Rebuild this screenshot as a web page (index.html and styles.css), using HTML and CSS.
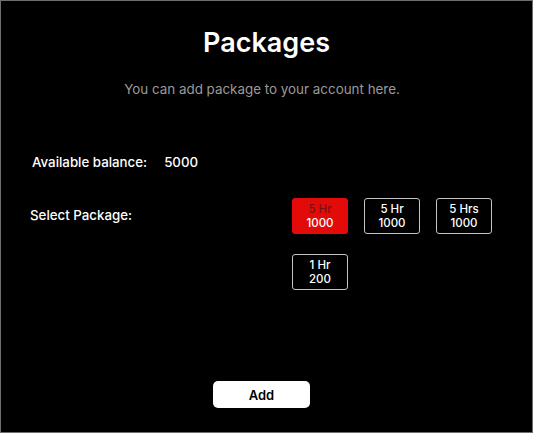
FILE: index.html
```html
<!DOCTYPE html>
<html>
<head>
  <meta charset="UTF-8">
  <title>Packages</title>
  <link rel="stylesheet" href="styles.css">
</head>
<body>
  <div class="page">
    <h1 class="title">Packages</h1>
    <p class="subtitle">You can add package to your account here.</p>

    <div class="balance">
      <span class="label">Available balance:</span>
      <span class="amount">5000</span>
    </div>

    <div class="select-row">
      <span class="label">Select Package:</span>
      <div class="packages">
        <button class="pkg active"><span class="hrs">5 Hr</span><span>1000</span></button>
        <button class="pkg"><span class="hrs">5 Hr</span><span>1000</span></button>
        <button class="pkg"><span class="hrs">5 Hrs</span><span>1000</span></button>
        <button class="pkg"><span class="hrs">1 Hr</span><span>200</span></button>
      </div>
    </div>

    <div class="actions">
      <button class="btn-add">Add</button>
    </div>
  </div>
</body>
</html>
```

FILE: styles.css
```css
* { box-sizing: border-box; }
body { margin: 0; background: #000; font-family: Inter, "Noto Sans", sans-serif; color: #fff; }
.page {
  width: 533px;
  height: 433px;
  border: 1px solid #6e6e6e;
  background: #000;
  display: flex;
  flex-direction: column;
}
.title {
  margin: 26px 0 0;
  text-align: center;
  font-size: 27px;
  font-weight: 600;
  line-height: 32px;
}
.subtitle {
  margin: 21px 0 0;
  padding-right: 9px;
  text-align: center;
  color: #9a9a9a;
  font-size: 13.4px;
  line-height: 18px;
}
.label { font-size: 13.3px; font-weight: 500; }
.balance {
  margin-top: 55px;
  padding-left: 31px;
  display: flex;
  gap: 17px;
  line-height: 18px;
}
.amount { font-size: 13.3px; font-weight: 500; }
.select-row {
  margin-top: 27px;
  padding-left: 29px;
  display: flex;
  align-items: flex-start;
}
.select-row .label { width: 262px; margin-top: 8px; line-height: 18px; }
.packages {
  display: grid;
  grid-template-columns: repeat(3, 56px);
  column-gap: 16px;
  row-gap: 20px;
}
.pkg {
  width: 56px;
  height: 36px;
  border: 1px solid #c4c4c4;
  border-radius: 3px;
  background: #000;
  color: #fff;
  font-family: inherit;
  font-size: 11.5px;
  font-weight: 500;
  line-height: 14px;
  padding: 0;
  display: flex;
  flex-direction: column;
  align-items: center;
  justify-content: center;
}
.pkg.active { background: #e30a0a; border-color: #e30a0a; }
.pkg.active .hrs { color: #7c1010; }
.actions {
  margin-top: auto;
  margin-bottom: 24px;
  display: flex;
  justify-content: center;
  padding-right: 10px;
}
.btn-add {
  width: 97px;
  height: 27px;
  border: none;
  border-radius: 5px;
  background: #fff;
  color: #000;
  font-family: inherit;
  font-size: 13px;
  font-weight: 600;
}
```
